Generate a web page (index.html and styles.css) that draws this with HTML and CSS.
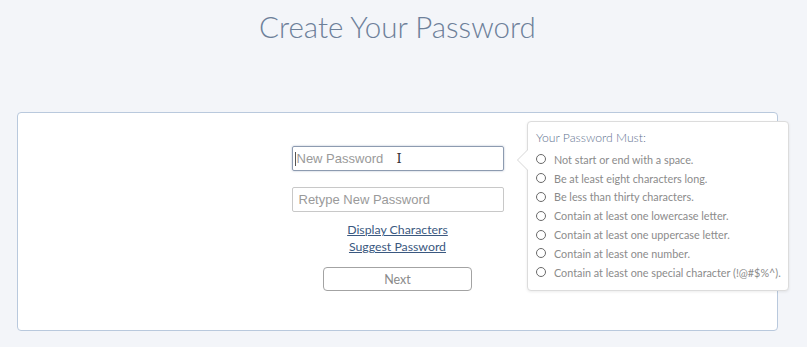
FILE: index.html
```html
<!DOCTYPE html>
<html>
<head>
<meta charset="utf-8">
<link rel="stylesheet" href="styles.css">
</head>
<body>
<h1 class="title">Create Your Password</h1>
<div class="card">
  <div class="form">
    <div class="field focused"><span class="caret"></span><span class="ph">New Password</span><span class="ibeam">I</span></div>
    <div class="field"><span class="ph">Retype New Password</span></div>
    <div class="links">
      <a href="#">Display Characters</a>
      <a href="#">Suggest Password</a>
    </div>
    <button class="next">Next</button>
  </div>
  <div class="pop">
    <div class="pop-title">Your Password Must:</div>
    <ul class="rules">
      <li><span class="dot"></span>Not start or end with a space.</li>
      <li><span class="dot"></span>Be at least eight characters long.</li>
      <li><span class="dot"></span>Be less than thirty characters.</li>
      <li><span class="dot"></span>Contain at least one lowercase letter.</li>
      <li><span class="dot"></span>Contain at least one uppercase letter.</li>
      <li><span class="dot"></span>Contain at least one number.</li>
      <li><span class="dot"></span>Contain at least one special character (!@#$%^).</li>
    </ul>
  </div>
</div>
</body>
</html>
```
FILE: styles.css
```css
html, body { margin: 0; padding: 0; }
body {
  background: #f3f5f9;
  font-family: Lato, "Open Sans", sans-serif;
  width: 807px;
  height: 347px;
  overflow: hidden;
}
.title {
  margin: 0 0 0 17px;
  width: 761px;
  padding-top: 7px;
  height: 106px;
  box-sizing: border-box;
  text-align: center;
  font-weight: 300;
  font-size: 29.5px;
  line-height: 40px;
  color: #6d8099;
}
.card {
  position: relative;
  margin: 6px 0 0 17px;
  width: 761px;
  height: 219px;
  box-sizing: border-box;
  background: #fff;
  border: 1px solid #b9c9dd;
  border-radius: 4px;
}
.form {
  display: flex;
  flex-direction: column;
  align-items: center;
  padding-top: 33px;
}
.field {
  width: 212px;
  height: 25px;
  box-sizing: border-box;
  border: 1px solid #c8c8c8;
  border-radius: 2px;
  display: flex;
  align-items: center;
  padding-left: 6px;
  font-family: "Liberation Sans", Arial, sans-serif;
  font-size: 13px;
  color: #9a9a9a;
  position: relative;
}
.field + .field { margin-top: 16px; }
.field.focused {
  border-color: #8d9bb0;
  box-shadow: 0 0 2px rgba(90,110,150,0.5);
  padding-left: 2px;
}
.caret {
  width: 1px; height: 14px; background: #555; margin-right: 1px;
}
.ibeam {
  position: absolute;
  left: 104px;
  top: 4px;
  font-family: "DejaVu Serif", serif;
  font-size: 13px;
  color: #333;
  line-height: 15px;
}
.links {
  display: flex;
  flex-direction: column;
  align-items: center;
  margin-top: 9px;
  font-size: 12.3px;
  line-height: 17px;
}
.links a {
  color: #3a5880;
  text-decoration: underline;
  text-decoration-thickness: 1px;
  text-underline-offset: 1px;
}
.next {
  margin-top: 12px;
  width: 149px;
  height: 24px;
  background: #fff;
  border: 1px solid #a3a3a3;
  border-radius: 4px;
  font-family: Lato, sans-serif;
  font-size: 12.5px;
  color: #8a8a8a;
  padding: 0;
}
.pop {
  position: absolute;
  left: 509px;
  top: 8px;
  width: 262px;
  height: 170px;
  box-sizing: border-box;
  background: #fff;
  border: 1px solid #dcdcdc;
  border-radius: 4px;
  box-shadow: 0 1px 3px rgba(0,0,0,0.08);
  padding: 8px 0 0 8px;
}
.pop::before {
  content: "";
  position: absolute;
  left: -11px;
  top: 27px;
  border-style: solid;
  border-width: 11px 11px 11px 0;
  border-color: transparent #d6d6d6 transparent transparent;
}
.pop::after {
  content: "";
  position: absolute;
  left: -10px;
  top: 28px;
  border-style: solid;
  border-width: 10px 10px 10px 0;
  border-color: transparent #fff transparent transparent;
}
.pop-title {
  font-size: 12.2px;
  font-weight: 300;
  color: #5f7390;
  line-height: 16px;
  margin-bottom: 4px;
}
.rules {
  list-style: none;
  margin: 0;
  padding: 0;
}
.rules li {
  display: flex;
  align-items: center;
  height: 18.8px;
  font-size: 10.8px;
  color: #8b8b8b;
}
.dot {
  width: 8px;
  height: 8px;
  border: 1.5px solid #6a6a6a;
  border-radius: 50%;
  margin: 0 8px 0 0;
  flex: none;
}
```
